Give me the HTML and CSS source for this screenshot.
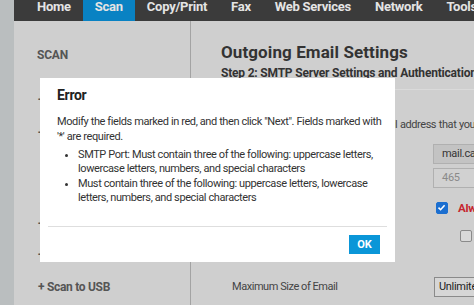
FILE: index.html
```html
<!DOCTYPE html>
<html>
<head>
<meta charset="utf-8">
<link rel="stylesheet" href="styles.css">
</head>
<body>
<div class="page">
  <div class="strip"></div>
  <div class="main">
    <nav class="nav">
      <span class="nav-item">Home</span>
      <span class="nav-item active">Scan</span>
      <span class="nav-item">Copy/Print</span>
      <span class="nav-item">Fax</span>
      <span class="nav-item">Web Services</span>
      <span class="nav-item">Network</span>
      <span class="nav-item">Tools</span>
    </nav>
    <div class="content">
      <aside class="sidebar">
        <div class="side-title">SCAN</div>
        <ul class="side-menu">
          <li class="g1">+ Scan to Email</li>
          <li class="g2">+ Scan to Network Folder</li>
          <li class="g3">+ Scan to SharePoint</li>
          <li class="g4">+ Scan to Computer</li>
          <li class="g5">+ Scan to USB</li>
        </ul>
      </aside>
      <section class="panel">
        <div class="panel-head">
          <h1 class="title">Outgoing Email Settings</h1>
          <h2 class="step">Step 2: SMTP Server Settings and Authentication</h2>
        </div>
        <p class="intro">Provide the SMTP server, and the email address that you use</p>
        <div class="form">
          <div class="row r1"><span></span><span class="input dark">mail.canon.com</span></div>
          <div class="row r2"><span></span><span class="input light">465</span></div>
          <div class="row r3"><span></span><span class="check-line"><span class="cb checked"><svg viewBox="0 0 11 11" width="11" height="11"><path d="M2.5 5.6 L4.6 7.7 L8.6 3.3" fill="none" stroke="#fff" stroke-width="1.6"/></svg></span><span class="red">Always use secure connection</span></span></div>
          <div class="row r4"><span></span><span class="check-line indent"><span class="cb"></span><span class="muted">Validate certificate</span></span></div>
          <div class="row r5"><span class="label">Maximum Size of Email</span><span class="select">Unlimited</span></div>
        </div>
      </section>
    </div>
  </div>
</div>

<div class="dialog">
  <div class="dlg-body">
    <div class="dlg-title">Error</div>
    <p class="dlg-text">Modify the fields marked in red, and then click "Next". Fields marked with '*' are required.</p>
    <ul class="dlg-list">
      <li>SMTP Port: Must contain three of the following: uppercase letters, lowercase letters, numbers, and special characters</li>
      <li>Must contain three of the following: uppercase letters, lowercase letters, numbers, and special characters</li>
    </ul>
  </div>
  <div class="dlg-sep"></div>
  <div class="dlg-foot"><span class="btn">OK</span></div>
</div>
</body>
</html>
```

FILE: styles.css
```css
html, body {
  margin: 0;
  padding: 0;
  overflow: hidden;
}
body {
  width: 474px;
  height: 305px;
  background: #cfcfcf;
  font-family: "Roboto", "Liberation Sans", sans-serif;
  color: #444;
  position: relative;
}
.page {
  display: flex;
  height: 305px;
}
.strip {
  width: 14px;
  flex: none;
  background: #babebf;
}
.main {
  flex: 1;
  display: flex;
  flex-direction: column;
  min-width: 0;
}
.nav {
  height: 21px;
  flex: none;
  background: #3b3b3b;
  display: flex;
  padding-left: 11px;
  white-space: nowrap;
  overflow: hidden;
}
.nav-item {
  padding: 0 12px;
  font-weight: bold;
  font-size: 13px;
  letter-spacing: -0.25px;
  line-height: 14px;
  color: #e4e4e4;
  height: 21px;
}
.nav-item.active {
  background: #0982c3;
}
.content {
  flex: 1;
  display: flex;
  min-height: 0;
}
.sidebar {
  width: 177px;
  flex: none;
  border-right: 1px solid #a3a3a3;
  padding-left: 23px;
  box-sizing: border-box;
}
.side-title {
  font-weight: bold;
  font-size: 12px;
  letter-spacing: -0.2px;
  line-height: 16px;
  color: #555;
  margin-top: 26px;
}
.side-menu {
  list-style: none;
  margin: 0;
  padding: 0;
  font-weight: bold;
  font-size: 12px;
  letter-spacing: -0.3px;
  line-height: 16px;
  color: #555;
  white-space: nowrap;
}
.side-menu li { margin-left: 1px; }
.g1 { margin-top: 29px; }
.g2 { margin-top: 17px; }
.g3 { margin-top: 75px; }
.g4 { margin-top: 15px; }
.g5 { margin-top: 16px; }
.panel {
  flex: 1;
  padding-left: 30px;
  min-width: 0;
  white-space: nowrap;
}
.panel-head {
  padding-top: 21px;
  padding-bottom: 8px;
  border-bottom: 1px solid #dadada;
}
.title {
  margin: 0;
  font-size: 17px;
  letter-spacing: 0.1px;
  line-height: 20px;
  font-weight: bold;
  color: #333;
}
.step {
  margin: 3px 0 0;
  font-size: 12px;
  letter-spacing: -0.2px;
  line-height: 16px;
  font-weight: bold;
  color: #333;
}
.intro {
  margin: 27px 0 0;
  font-size: 11px;
  letter-spacing: -0.45px;
  word-spacing: 0.5px;
  line-height: 16px;
  color: #444;
}
.form {
  margin-top: 11px;
}
.row {
  display: grid;
  grid-template-columns: 212px 1fr;
  align-items: center;
}
.input {
  display: block;
  height: 20px;
  box-sizing: border-box;
  padding-left: 8px;
  font-size: 11px;
  letter-spacing: -0.3px;
  line-height: 18px;
  border: 1px solid #b0b0b0;
  border-right: none;
}
.input.dark { background: #c3c3c3; color: #333; }
.input.light { background: #d1d1d1; color: #8a8a8a; }
.r2 { margin-top: 4px; }
.r3 { margin-top: 13px; }
.r4 { margin-top: 14px; }
.r5 { margin-top: 34px; }
.check-line {
  display: flex;
  align-items: center;
  gap: 10px;
  padding-left: 3px;
  font-size: 11.5px;
  letter-spacing: -0.3px;
  line-height: 14px;
}
.check-line.indent { padding-left: 27px; }
.cb {
  width: 10px;
  height: 10px;
  flex: none;
  border: 1px solid #8a8a8a;
  border-radius: 2px;
  background: #d9d9d9;
  display: flex;
}
.cb.checked {
  background: #1c6fd0;
  border-color: #1c6fd0;
}
.cb svg { display: block; margin: -1px; }
.red { color: #c6262e; font-weight: bold; }
.muted { color: #444; }
.label {
  padding-left: 11px;
  font-size: 11px;
  letter-spacing: -0.45px;
  line-height: 16px;
  color: #444;
}
.select {
  display: block;
  height: 20px;
  box-sizing: border-box;
  margin-left: 1px;
  padding-left: 4px;
  border: 1px solid #8a8a8a;
  border-right: none;
  background: #d6d6d6;
  color: #222;
  font-size: 11px;
  letter-spacing: -0.3px;
  line-height: 18px;
}

.dialog {
  position: absolute;
  left: 40px;
  top: 78px;
  width: 355px;
  height: 184px;
  background: #fff;
  display: flex;
  flex-direction: column;
}
.dlg-body {
  height: 148px;
  padding: 8px 8px 0 17px;
  box-sizing: border-box;
}
.dlg-title {
  font-weight: bold;
  font-size: 14px;
  letter-spacing: -0.3px;
  line-height: 18px;
  color: #222;
}
.dlg-text {
  margin: 10px 0 0;
  font-size: 11px;
  letter-spacing: -0.4px;
  line-height: 15px;
  color: #333;
}
.dlg-list {
  margin: 4px 0 0;
  padding-left: 21px;
  font-size: 11px;
  letter-spacing: -0.4px;
  line-height: 14.3px;
  color: #333;
}
.dlg-sep {
  height: 1px;
  background: #dedede;
  margin: 0 8px;
}
.dlg-foot {
  display: flex;
  justify-content: flex-end;
  padding: 8px 15px 8px 0;
}
.btn {
  width: 31px;
  height: 19px;
  background: #0a96d8;
  color: #fff;
  font-weight: bold;
  font-size: 11px;
  line-height: 19px;
  text-align: center;
}
```
